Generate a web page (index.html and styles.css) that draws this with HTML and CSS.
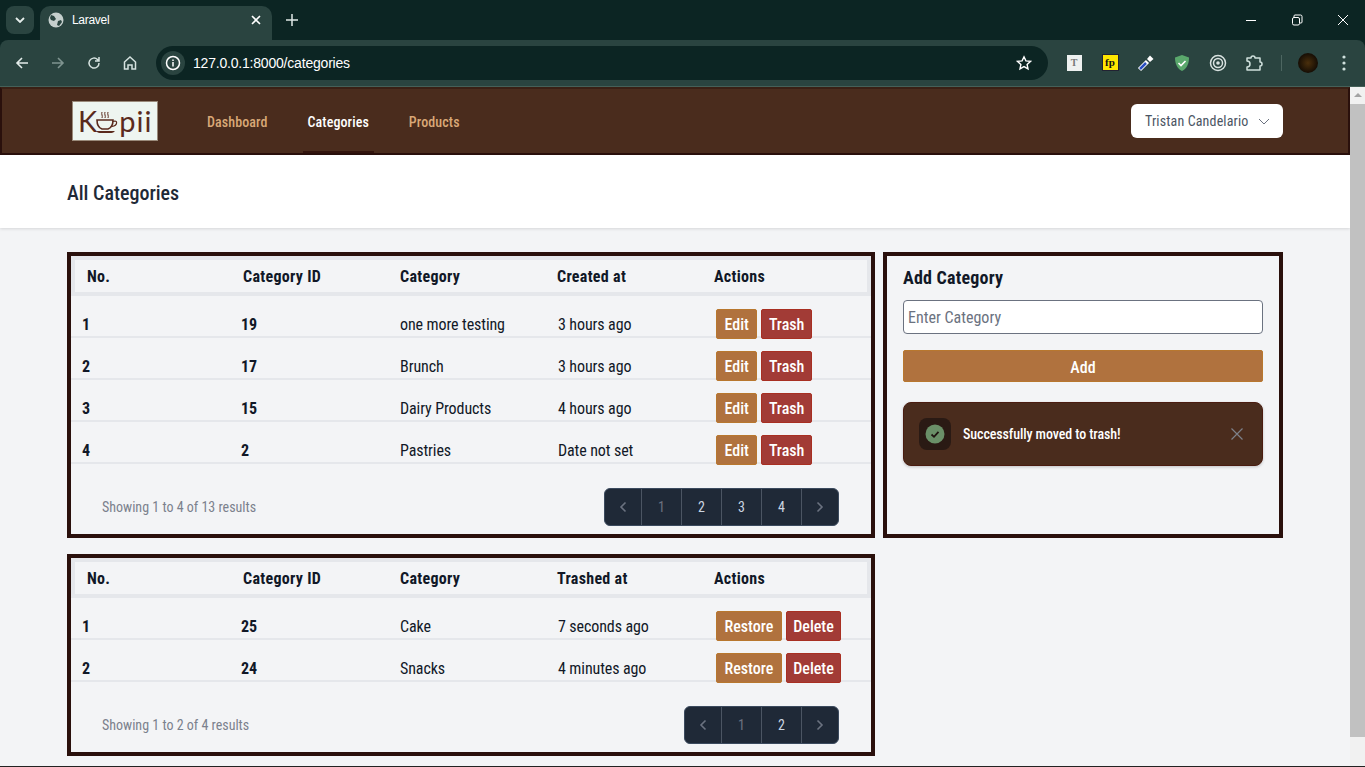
FILE: index.html
```html
<!DOCTYPE html>
<html lang="en">
<head>
    <meta charset="UTF-8">
    <title>Laravel</title>
    <link rel="stylesheet" href="styles.css">
</head>
<body>
    <div class="browser-bar">
    <div class="tabstrip">
        <button class="tab-list"><svg width="10" height="6" viewBox="0 0 10 6"><path d="M1 1l4 4 4-4" fill="none" stroke="#e6eeec" stroke-width="1.8"/></svg></button>
        <div class="tab">
            <svg width="16" height="16" viewBox="0 0 16 16"><circle cx="8" cy="8" r="7.5" fill="#c5cfcd"/><path d="M3 3l3 1 2 3-2 2-3-1-1-2zM10 9l3-1 1 2-3 4-2-1z" fill="#2a4440"/></svg>
            <span class="tab-title">Laravel</span>
            <svg class="tab-close" width="10" height="10" viewBox="0 0 10 10"><path d="M1 1l8 8M9 1l-8 8" stroke="#fff" stroke-width="1.6"/></svg>
        </div>
        <svg class="tab-new" width="12" height="12" viewBox="0 0 12 12"><path d="M6 0v12M0 6h12" stroke="#dfe8e6" stroke-width="1.5"/></svg>
        <div class="window-btns">
            <svg width="12" height="12" viewBox="0 0 12 12"><path d="M1 6.5h10" stroke="#fff"/></svg>
            <svg width="12" height="12" viewBox="0 0 12 12"><path d="M3 3.5V2a1 1 0 0 1 1-1h5.500a1.500 1.500 0 0 1 1.500 1.500V8a1 1 0 0 1-1 1H9" fill="none" stroke="#fff"/><rect x="1.500" y="3.500" width="7" height="7.500" rx="1.500" fill="none" stroke="#fff"/></svg>
            <svg width="12" height="12" viewBox="0 0 12 12"><path d="M1 1l10 10M11 1L1 11" stroke="#fff"/></svg>
        </div>
    </div>
    <div class="toolbar">
        <div class="nav-icons">
            <svg width="16" height="16" viewBox="0 0 16 16"><path d="M14 8H3M8 3L3 8l5 5" fill="none" stroke="#e3ecea" stroke-width="1.6"/></svg>
            <svg width="16" height="16" viewBox="0 0 16 16"><path d="M2 8h11M8 3l5 5-5 5" fill="none" stroke="#7f9490" stroke-width="1.6"/></svg>
            <svg width="16" height="16" viewBox="0 0 16 16"><path d="M13 8a5 5 0 1 1-1.500-3.500L13 6M13 2v4H9" fill="none" stroke="#d5e2df" stroke-width="1.5"/></svg>
            <svg width="16" height="16" viewBox="0 0 16 16"><path d="M2.500 7L8 2l5.500 5v7H10v-4H6v4H2.500z" fill="none" stroke="#d5e2df" stroke-width="1.5"/></svg>
        </div>
        <div class="omnibox">
            <span class="site-info"><svg width="16" height="16" viewBox="0 0 16 16"><circle cx="8" cy="8" r="6.500" fill="none" stroke="#fff" stroke-width="1.500"/><path d="M8 7v4.500M8 4.500v1.500" stroke="#fff" stroke-width="1.500"/></svg></span>
            <span class="url">127.0.0.1:8000/categories</span>
            <svg class="star" width="16" height="16" viewBox="0 0 16 16"><path d="M8 1.800l1.900 4.100 4.500.5-3.300 3 .9 4.400L8 11.600l-4 2.200.9-4.400-3.300-3 4.500-.5z" fill="none" stroke="#fff" stroke-width="1.400"/></svg>
        </div>
        <div class="ext-icons">
            <span class="ext-t">T</span>
            <span class="ext-fp">fp</span>
            <svg width="18" height="18" viewBox="0 0 18 18"><path d="M2.500 15.500l8-8" stroke="#fff" stroke-width="4.500"/><path d="M3 15l6-6" stroke="#2a4fc0" stroke-width="2.500"/><path d="M10 5l3-3.500 3.500 3.500-3.500 3z" fill="#fff"/></svg>
            <svg width="16" height="18" viewBox="0 0 16 18"><path d="M8 1l7 2.500c0 6-2 11-7 13.500C3 14.500 1 9.500 1 3.500z" fill="#5aa86c"/><path d="M4.500 9l2.500 2.500 4.500-4.500" fill="none" stroke="#fff" stroke-width="1.600"/></svg>
            <svg width="18" height="18" viewBox="0 0 18 18"><circle cx="9" cy="9" r="7.500" fill="none" stroke="#d9e2e0" stroke-width="1.500"/><circle cx="9" cy="9" r="4.500" fill="none" stroke="#d9e2e0" stroke-width="1.500"/><circle cx="9" cy="9" r="1.800" fill="#d9e2e0"/></svg>
            <svg width="18" height="18" viewBox="0 0 18 18"><path d="M2 4h4a2 2 0 0 1 4 0h5v4a2 2 0 0 1 0 4v4H2v-3a2 2 0 0 0 0-6z" fill="none" stroke="#cfe0dc" stroke-width="1.500" stroke-linejoin="round"/></svg>
            <span class="ext-sep"></span>
            <span class="avatar"></span>
            <svg width="4" height="16" viewBox="0 0 4 16"><circle cx="2" cy="2" r="1.600" fill="#cfe0dc"/><circle cx="2" cy="8" r="1.600" fill="#cfe0dc"/><circle cx="2" cy="14" r="1.600" fill="#cfe0dc"/></svg>
        </div>
    </div>
    </div>

    <div class="viewport">
        <div class="page">
            <nav class="topnav">
                <div class="nav-left">
                    <a class="logo">K<svg width="24" height="24" viewBox="0 0 24 24"><path d="M7 1c-1 2 1 4 0 6M10 1c-1 2 1 4 0 6M13 1c-1 2 1 4 0 6" fill="none" stroke="#5a2a1c" stroke-width="1"/><path d="M2 9h16c0 5-2 8-5 9H7c-3-1-5-4-5-9z" fill="none" stroke="#5a2a1c" stroke-width="1.600"/><path d="M18 10.500c5-2 5 4-1 5" fill="none" stroke="#5a2a1c" stroke-width="1.200"/><path d="M1 20h19c-2 2-3 2-5 2H6c-2 0-3 0-5-2z" fill="#5a2a1c"/></svg>pii</a>
                    <a class="nav-link">Dashboard</a>
                    <a class="nav-link active">Categories</a>
                    <a class="nav-link">Products</a>
                </div>
                <button class="user-btn">Tristan Candelario <svg width="12" height="7" viewBox="0 0 12 7"><path d="M1 1l5 5 5-5" fill="none" stroke="#6b7280" stroke-width="1"/></svg></button>
            </nav>
            <header class="page-header"><h2>All Categories</h2></header>

            <main class="content">
                <section class="panel">
                    <table class="data-table">
                        <thead>
                            <tr><th>No.</th><th>Category ID</th><th>Category</th><th>Created at</th><th>Actions</th></tr>
                        </thead>
                        <tbody>
                            <tr><td class="strong">1</td><td class="strong">19</td><td>one more testing</td><td>3 hours ago</td><td><a class="btn btn-edit">Edit</a><a class="btn btn-red">Trash</a></td></tr>
                            <tr><td class="strong">2</td><td class="strong">17</td><td>Brunch</td><td>3 hours ago</td><td><a class="btn btn-edit">Edit</a><a class="btn btn-red">Trash</a></td></tr>
                            <tr><td class="strong">3</td><td class="strong">15</td><td>Dairy Products</td><td>4 hours ago</td><td><a class="btn btn-edit">Edit</a><a class="btn btn-red">Trash</a></td></tr>
                            <tr><td class="strong">4</td><td class="strong">2</td><td>Pastries</td><td>Date not set</td><td><a class="btn btn-edit">Edit</a><a class="btn btn-red">Trash</a></td></tr>
                        </tbody>
                    </table>
                    <div class="table-foot">
                        <span class="results">Showing 1 to 4 of 13 results</span>
                        <div class="pager">
                            <span class="page-cell"><svg width="8" height="12" viewBox="0 0 8 12"><path d="M6.500 1.500L2 6l4.500 4.500" fill="none" stroke="#6b7280" stroke-width="1.600"/></svg></span>
                            <span class="page-cell off">1</span>
                            <span class="page-cell">2</span>
                            <span class="page-cell">3</span>
                            <span class="page-cell">4</span>
                            <span class="page-cell"><svg width="8" height="12" viewBox="0 0 8 12"><path d="M1.500 1.500L6 6l-4.500 4.500" fill="none" stroke="#6b7280" stroke-width="1.600"/></svg></span>
                        </div>
                    </div>
                </section>

                <aside class="panel add-panel">
                    <h3>Add Category</h3>
                    <input class="cat-input" type="text" placeholder="Enter Category">
                    <button class="add-btn">Add</button>
                    <div class="toast">
                        <span class="toast-icon"><svg width="20" height="20" viewBox="0 0 20 20"><circle cx="10" cy="10" r="9.500" fill="#6a9068"/><path d="M6.500 10.500l2.500 2.300 4.500-5" fill="none" stroke="#1f1410" stroke-width="1.800"/></svg></span>
                        <span class="toast-text">Successfully moved to trash!</span>
                        <svg class="toast-close" width="12" height="12" viewBox="0 0 12 12"><path d="M.5.5l11 11M11.500.5l-11 11" stroke="#7d8089" stroke-width="1.200"/></svg>
                    </div>
                </aside>

                <section class="panel trash-panel">
                    <table class="data-table">
                        <thead>
                            <tr><th>No.</th><th>Category ID</th><th>Category</th><th>Trashed at</th><th>Actions</th></tr>
                        </thead>
                        <tbody>
                            <tr><td class="strong">1</td><td class="strong">25</td><td>Cake</td><td>7 seconds ago</td><td><a class="btn btn-edit">Restore</a><a class="btn btn-red">Delete</a></td></tr>
                            <tr><td class="strong">2</td><td class="strong">24</td><td>Snacks</td><td>4 minutes ago</td><td><a class="btn btn-edit">Restore</a><a class="btn btn-red">Delete</a></td></tr>
                        </tbody>
                    </table>
                    <div class="table-foot">
                        <span class="results">Showing 1 to 2 of 4 results</span>
                        <div class="pager">
                            <span class="page-cell"><svg width="8" height="12" viewBox="0 0 8 12"><path d="M6.500 1.500L2 6l4.500 4.500" fill="none" stroke="#6b7280" stroke-width="1.600"/></svg></span>
                            <span class="page-cell off">1</span>
                            <span class="page-cell">2</span>
                            <span class="page-cell"><svg width="8" height="12" viewBox="0 0 8 12"><path d="M1.500 1.500L6 6l-4.500 4.500" fill="none" stroke="#6b7280" stroke-width="1.600"/></svg></span>
                        </div>
                    </div>
                </section>
            </main>
        </div>
        <div class="scrollbar">
            <span class="scroll-up"></span>
            <span class="scroll-thumb"></span>
        </div>
    </div>
</body>
</html>
```

FILE: styles.css
```css
* {
    box-sizing: border-box;
}

html, body {
    height: 767px;
    overflow: hidden;
}

body {
    margin: 0;
    font-family: Roboto, "Liberation Sans", Arial, sans-serif;
    font-stretch: 75%;
    background-color: #f3f4f6;
    color: #111827;
}

/* browser chrome */
.browser-bar {
    background-color: #0c2523;
    font-family: "Liberation Sans", Arial, sans-serif;
    font-stretch: normal;
}

.tabstrip {
    height: 40px;
    display: flex;
    align-items: flex-start;
    padding: 6px 0 0 6px;
}

.tab-list {
    width: 28px;
    height: 28px;
    border: none;
    border-radius: 8px;
    background-color: #2a4440;
    display: flex;
    align-items: center;
    justify-content: center;
    padding: 0;
}

.tab {
    width: 232px;
    height: 34px;
    margin-left: 6px;
    background-color: #2a4440;
    border-radius: 10px 10px 0 0;
    display: flex;
    align-items: center;
    padding: 0 11px 6px 8px;
    color: #fff;
    font-size: 12px;
    letter-spacing: -0.3px;
}

.tab-title {
    margin-left: 8px;
    flex: 1;
}

.tab-new {
    margin: 8px 0 0 14px;
}

.window-btns {
    margin-left: auto;
    display: flex;
    gap: 34px;
    padding: 8px 16px 0 0;
}

.toolbar {
    height: 47px;
    background-color: #2a4440;
    border-bottom: 1px solid #456058;
    border-radius: 8px 8px 0 0;
    display: flex;
    align-items: center;
    padding: 0 3px 1px 14px;
}

.nav-icons {
    display: flex;
    gap: 20px;
    width: 142px;
}

.omnibox {
    width: 892px;
    height: 34px;
    border-radius: 17px;
    background-color: #0c2523;
    display: flex;
    align-items: center;
    padding: 0 16px 0 5px;
    color: #fff;
    font-size: 14px;
}

.site-info {
    width: 24px;
    height: 24px;
    border-radius: 50%;
    background-color: #2a4440;
    display: flex;
    align-items: center;
    justify-content: center;
}

.url {
    margin-left: 8px;
    flex: 1;
    letter-spacing: -0.2px;
}

.ext-icons {
    padding-left: 8px;
    display: grid;
    grid-template-columns: repeat(6, 36px) 18px 36px 36px;
    align-items: center;
    justify-items: center;
}

.ext-t {
    width: 15px;
    height: 16px;
    background-color: #eef1f0;
    color: #777;
    font: bold 10px/16px "Liberation Serif", serif;
    text-align: center;
}

.ext-fp {
    width: 17px;
    height: 17px;
    background-color: #ffe600;
    border: 1px solid #223;
    color: #111;
    font: bold 11px/14px "Liberation Serif", serif;
    text-align: center;
}

.ext-sep {
    width: 1px;
    height: 16px;
    background-color: #4d6661;
}

.avatar {
    width: 20px;
    height: 20px;
    border-radius: 50%;
    background: radial-gradient(circle, #4a2f0c 0, #120b04 75%);
}

/* page */
.viewport {
    display: flex;
    height: 680px;
    border-bottom: 1px solid #222;
}

.page {
    flex: 1;
    min-width: 0;
    background-color: #f3f4f6;
}

.scrollbar {
    width: 15px;
    background-color: #f1f1f1;
    display: flex;
    flex-direction: column;
    align-items: stretch;
}

.scroll-up {
    height: 17px;
    position: relative;
}

.scroll-up::after {
    content: "";
    position: absolute;
    left: 3px;
    top: 6px;
    border-left: 4px solid transparent;
    border-right: 4px solid transparent;
    border-bottom: 4px solid #a3a3a3;
    margin-left: 1px;
}

.scroll-thumb {
    height: 633px;
    background-color: #c1c1c1;
}

.topnav {
    height: 68px;
    background-color: #4a2c1d;
    border: 2px solid #2a100c;
    border-top-color: #3a2015;
    display: flex;
    align-items: stretch;
    justify-content: space-between;
    padding: 0 65px 0 70px;
}

.nav-left {
    display: flex;
    align-items: center;
}

.logo {
    width: 86px;
    height: 40px;
    background-color: #eef5f0;
    border: 1px solid #9a8a7a;
    color: #5a2a1c;
    font-family: Lato, "Liberation Sans", Arial, sans-serif;
    font-stretch: normal;
    font-weight: 400;
    font-size: 29px;
    line-height: 36px;
    display: flex;
    align-items: center;
    padding: 0 0 0 5px;
    margin: 0 44px 0 0;
    letter-spacing: 1px;
}

.logo svg {
    margin: 3px 0 0 -3px;
    flex: none;
}

.nav-link {
    height: 100%;
    display: flex;
    align-items: center;
    padding: 4px 5px 0;
    font-size: 14px;
    font-weight: 500;
    letter-spacing: 0.1px;
    color: #d9a877;
    margin-right: 30px;
    border-bottom: 2px solid transparent;
}

.nav-link.active {
    color: #fff;
    border-bottom-color: #33140d;
}

.user-btn {
    width: 152px;
    height: 34px;
    align-self: center;
    background-color: #fff;
    border: none;
    border-radius: 6px;
    color: #4b5563;
    font-family: inherit;
    font-stretch: inherit;
    font-size: 14px;
    letter-spacing: 0.15px;
    white-space: nowrap;
    display: flex;
    align-items: center;
    justify-content: space-between;
    padding: 0 13px 0 14px;
}

.page-header {
    height: 73px;
    background-color: #fff;
    box-shadow: 0 1px 3px rgba(0, 0, 0, 0.12);
    display: flex;
    align-items: center;
    padding: 2px 0 0 67px;
}

.page-header h2 {
    margin: 0;
    font-size: 20px;
    font-weight: 500;
    color: #1f2937;
}

.content {
    display: grid;
    grid-template-columns: 808px 400px;
    column-gap: 8px;
    row-gap: 16px;
    grid-template-rows: 286px 202px;
    padding: 24px 0 0 67px;
}

.panel {
    border: 4px solid #2a100c;
    background-color: #f3f4f6;
    display: flex;
    flex-direction: column;
}

.trash-panel {
    grid-column: 1;
}

.data-table {
    width: 800px;
    border-collapse: separate;
    border-spacing: 0;
    table-layout: fixed;
    font-size: 16px;
    color: #111827;
}

.data-table th {
    width: 157px;
    height: 40px;
    text-align: left;
    padding: 0 0 0 15px;
    font-size: 16px;
    font-weight: 700;
    letter-spacing: 0.3px;
    border-top: 4px solid #e5e7eb;
    border-bottom: 4px solid #e5e7eb;
}

.data-table th:first-child {
    padding-left: 12px;
    border-left: 4px solid #e5e7eb;
}

.data-table th:last-child {
    width: 172px;
    border-right: 4px solid #e5e7eb;
}

.data-table td {
    height: 42px;
    padding: 16px 0 0 12px;
    border-bottom: 2px solid #e5e7eb;
    white-space: nowrap;
    vertical-align: middle;
    letter-spacing: -0.1px;
}

.data-table td:first-child {
    padding-left: 11px;
}

.data-table td:nth-child(2) {
    padding-left: 13px;
}

.data-table td:nth-child(3) {
    padding-left: 15px;
}

.data-table td:nth-child(4) {
    padding-left: 16px;
}

.data-table td:nth-child(5) {
    padding: 13px 0 0 17px;
    vertical-align: top;
}

.strong {
    font-weight: 700;
}

.btn {
    display: inline-flex;
    align-items: center;
    vertical-align: top;
    height: 30px;
    margin: 0 4px -6px 0;
    color: #fff;
    font-weight: 500;
    font-size: 16px;
    letter-spacing: 0;
    border-radius: 2px;
    border: 1px solid;
}

.btn-edit {
    padding: 0 7.5px;
    background-color: #b0723e;
    border-color: #b8772e;
}

.btn-red {
    padding: 0 6.5px;
    background-color: #a23b36;
    border-color: #a82f22;
}

.table-foot {
    display: flex;
    align-items: center;
    justify-content: space-between;
    padding: 24px 32px 0 31px;
}

.results {
    font-size: 14px;
    color: #7b818d;
}

.pager {
    display: flex;
    height: 38px;
    background-color: #1f2937;
    border: 1px solid #3b4a5e;
    border-radius: 6px;
}

.page-cell {
    width: 40px;
    display: flex;
    align-items: center;
    justify-content: center;
    color: #cbd5e1;
    font-size: 14px;
    border-left: 1px solid #4b5563;
}

.page-cell:first-child {
    width: 36px;
    border-left: none;
}

.page-cell:last-child {
    width: 37px;
}

.page-cell.off {
    color: #6b7280;
}

.add-panel {
    padding: 6px 16px 0 16px;
}

.add-panel h3 {
    margin: 3px 0 0;
    font-size: 18px;
    font-weight: 700;
    line-height: 26px;
    letter-spacing: 0.2px;
}

.cat-input {
    width: 100%;
    height: 34px;
    margin-top: 9px;
    padding: 1px 4px 0;
    background-color: #fff;
    border: 1px solid #6b7280;
    border-radius: 4px;
    font-family: inherit;
    font-stretch: inherit;
    font-size: 16px;
}

.cat-input::placeholder {
    color: #6b7280;
}

.add-btn {
    width: 100%;
    height: 32px;
    margin-top: 16px;
    padding: 2px 0 0;
    background-color: #b0723e;
    border: 1px solid #b8772e;
    border-radius: 2px;
    color: #fff;
    font-family: inherit;
    font-stretch: inherit;
    font-size: 16px;
    font-weight: 500;
}

.toast {
    height: 64px;
    margin-top: 20px;
    background-color: #4a2c1d;
    border: 1px solid #4a1c10;
    border-radius: 8px;
    box-shadow: 0 1px 3px rgba(0, 0, 0, 0.2);
    display: flex;
    align-items: center;
    padding: 0 19px 0 15px;
    color: #fff;
}

.toast-icon {
    width: 32px;
    height: 32px;
    background-color: #2a1a14;
    border-radius: 8px;
    display: flex;
    align-items: center;
    justify-content: center;
}

.toast-text {
    flex: 1;
    margin-left: 12px;
    font-size: 14px;
    font-weight: 500;
    letter-spacing: -0.1px;
}
```
